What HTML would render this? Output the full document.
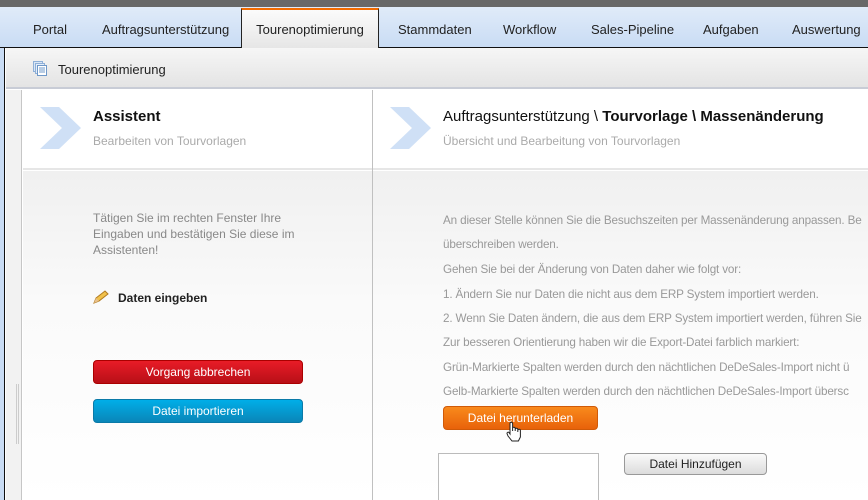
<!DOCTYPE html>
<html><head><meta charset="utf-8"><style>
*{margin:0;padding:0;box-sizing:border-box}
body{width:868px;height:500px;overflow:hidden;background:#fff;font-family:"Liberation Sans",sans-serif;position:relative}
.abs{position:absolute}
#top{left:0;top:0;width:868px;height:7px;background:#686868}
#tabs{left:0;top:7px;width:868px;height:41px;background:linear-gradient(#e0ebf9,#c9dcf4);border-bottom:1px solid #111}
.tab{position:absolute;top:15px;font-size:13px;color:#222}
#act{left:241px;top:8px;width:138px;height:40px;background:linear-gradient(#fbfbfb,#e6e6e6);border-top:2px solid #f26b00;border-left:1px solid #222;border-right:1px solid #222;font-size:13px;color:#222;text-align:center;padding-top:12px}
#lstrip{left:0;top:48px;width:5px;height:452px;background:#c9dcf4;border-right:1px solid #111}
#sub{left:6px;top:48px;width:862px;height:41px;background:linear-gradient(#f6f6f6,#e4e4e4);border-bottom:2px solid #c8ccd6}
#lgray{left:6px;top:90px;width:16px;height:410px;background:#f2f2f2;border-right:1px solid #c6c6c6}
.hdr{top:90px;height:80px;background:#fff;border-bottom:2px solid #e6e6e6}
.body{top:171px;height:329px;background:linear-gradient(#f0f0f0,#fafafa 40%,#fff)}
.t{font-size:11.7px;letter-spacing:-0.15px;color:#999;position:absolute;left:443px;white-space:nowrap}
.btn{position:absolute;border-radius:4px;color:#fff;font-size:12px;text-align:center;line-height:23px}
</style></head><body>
<div id="top" class="abs"></div>
<div id="tabs" class="abs">
<span class="tab" style="left:33px">Portal</span>
<span class="tab" style="left:102px">Auftragsunterstützung</span>
<span class="tab" style="left:398px">Stammdaten</span>
<span class="tab" style="left:503px">Workflow</span>
<span class="tab" style="left:591px">Sales-Pipeline</span>
<span class="tab" style="left:703px">Aufgaben</span>
<span class="tab" style="left:792px">Auswertung</span>
</div>
<div id="act" class="abs">Tourenoptimierung</div>
<div id="lstrip" class="abs"></div>
<div id="sub" class="abs">
<svg class="abs" style="left:27px;top:13px" width="15" height="15"><rect x="0.5" y="0.5" width="9" height="10" fill="#dbe7f5" stroke="#8fb0d8"/><rect x="2.5" y="2.5" width="9" height="10" fill="#e4eefa" stroke="#8fb0d8"/><rect x="4.5" y="4.5" width="9" height="10" fill="#fff" stroke="#6f98c8"/><path d="M6 7h6M6 9h6M6 11h6" stroke="#6f98c8"/></svg>
<span class="abs" style="left:52px;top:14px;font-size:13px;color:#222">Tourenoptimierung</span>
</div>
<div id="lgray" class="abs"></div>
<div class="abs hdr" style="left:23px;width:349px"></div>
<div class="abs hdr" style="left:373px;width:495px"></div>
<div class="abs" style="left:372px;top:90px;width:1px;height:410px;background:#c0c0c0"></div>
<div class="abs body" style="left:23px;width:349px"></div>
<div class="abs body" style="left:373px;width:495px"></div>
<svg class="abs" style="left:40px;top:107px" width="42" height="42"><path d="M0 0h19l22 21-22 21H0l22-21z" fill="#cfe0f6"/></svg>
<svg class="abs" style="left:390px;top:107px" width="42" height="42"><path d="M0 0h19l22 21-22 21H0l22-21z" fill="#cfe0f6"/></svg>
<div class="abs" style="left:93px;top:108px;font-size:15px;font-weight:bold;color:#111">Assistent</div>
<div class="abs" style="left:93px;top:134px;font-size:12px;color:#aaa">Bearbeiten von Tourvorlagen</div>
<div class="abs" style="left:443px;top:108px;font-size:15px;color:#111">Auftragsunterstützung \ <b>Tourvorlage \ Massenänderung</b></div>
<div class="abs" style="left:443px;top:134px;font-size:12px;color:#aaa">Übersicht und Bearbeitung von Tourvorlagen</div>
<div class="abs" style="left:93px;top:210px;font-size:12px;color:#888;line-height:16px;width:230px">Tätigen Sie im rechten Fenster Ihre Eingaben und bestätigen Sie diese im Assistenten!</div>
<svg class="abs" style="left:93px;top:290px" width="16" height="14"><path d="M1 13l2-5 9-7 3 3-9 7z" fill="#f1c14b" stroke="#b07a20"/><path d="M1 13l2-5 3 3z" fill="#e8c08a"/></svg>
<div class="abs" style="left:118px;top:291px;font-size:12px;font-weight:bold;color:#222">Daten eingeben</div>
<div class="btn" style="left:93px;top:360px;width:210px;height:24px;background:linear-gradient(#e81c27,#b80f17);border:1px solid #a00">Vorgang abbrechen</div>
<div class="btn" style="left:93px;top:399px;width:210px;height:24px;background:linear-gradient(#00aee8,#0a86b8);border:1px solid #0a7aa8">Datei importieren</div>
<div class="t" style="top:214px">An dieser Stelle können Sie die Besuchszeiten per Massenänderung anpassen. Be</div>
<div class="t" style="top:238px">überschreiben werden.</div>
<div class="t" style="top:263px">Gehen Sie bei der Änderung von Daten daher wie folgt vor:</div>
<div class="t" style="top:288px">1. Ändern Sie nur Daten die nicht aus dem ERP System importiert werden.</div>
<div class="t" style="top:312px">2. Wenn Sie Daten ändern, die aus dem ERP System importiert werden, führen Sie</div>
<div class="t" style="top:336px">Zur besseren Orientierung haben wir die Export-Datei farblich markiert:</div>
<div class="t" style="top:361px">Grün-Markierte Spalten werden durch den nächtlichen DeDeSales-Import nicht ü</div>
<div class="t" style="top:385px">Gelb-Markierte Spalten werden durch den nächtlichen DeDeSales-Import übersc</div>
<div class="btn" style="left:443px;top:406px;width:155px;height:24px;background:linear-gradient(#f98a1c,#e8620a);border:1px solid #d05a08">Datei herunterladen</div>
<svg class="abs" style="left:506px;top:421px" width="16" height="22"><path d="M4 13V2.5a1.3 1.3 0 0 1 2.6 0V10V7.5a1.3 1.3 0 0 1 2.6 0V10V8.5a1.3 1.3 0 0 1 2.6 0V11V9.5a1.3 1.3 0 0 1 2.6 0V16l-2 4H6l-4-5-1-2.5a1.2 1.2 0 0 1 2-1z" fill="#fff" stroke="#222"/></svg>
<div class="abs" style="left:438px;top:453px;width:161px;height:47px;background:#fff;border:1px solid #bbb;border-bottom:none"></div>
<div class="btn" style="left:624px;top:453px;width:143px;height:22px;line-height:20px;color:#222;background:linear-gradient(#fafafa,#dcdcdc);border:1px solid #999">Datei Hinzufügen</div>
<div class="abs" style="left:16px;top:384px;width:3px;height:60px;border-left:1px solid #ccc;border-right:1px solid #ccc"></div>
</body></html>
